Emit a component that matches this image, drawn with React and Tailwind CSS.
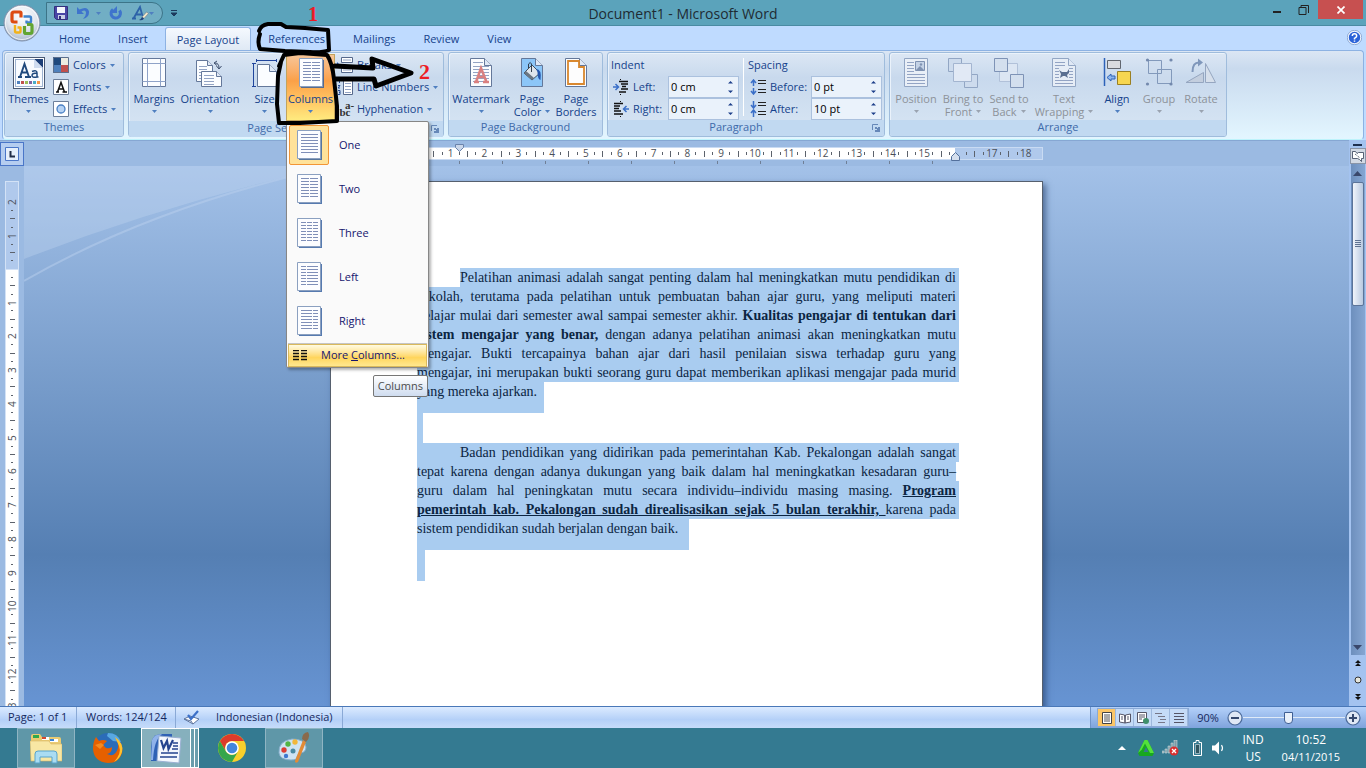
import { clsx } from 'clsx';

const TABS = ['Home', 'Insert', 'Page Layout', 'References', 'Mailings', 'Review', 'View'];

const COLUMN_PRESETS = [
  { name: 'One', bars: [[9, 17]] },
  { name: 'Two', bars: [[9, 8], [18, 8]] },
  { name: 'Three', bars: [[9, 5], [15, 5], [21, 5]] },
  { name: 'Left', bars: [[9, 5], [15, 11]] },
  { name: 'Right', bars: [[9, 11], [21, 5]] },
];

function Caret({ muted }) {
  return (
    <svg width="5" height="3" viewBox="0 0 5 3" className="inline-block shrink-0" aria-hidden="true">
      <path d="M0 0h5L2.500 3z" fill={muted ? '#9aa3b0' : '#4f7fc0'} />
    </svg>
  );
}

/* ---------- icons ---------- */

function Icon({ w = 32, h = 32, children }) {
  return (
    <svg width={w} height={h} viewBox={`0 0 ${w} ${h}`} className="shrink-0" aria-hidden="true">
      {children}
    </svg>
  );
}

function Sheet({ x = 5, y = 1, w = 21, h = 28, fold = 7, fill = '#fbfdff', stroke = '#64789a' }) {
  return (
    <>
      <path
        d={`M${x} ${y}h${w - fold}l${fold} ${fold}v${h - fold}h-${w}z`}
        fill={fill}
        stroke={stroke}
      />
      <path d={`M${x + w - fold} ${y}v${fold}h${fold}`} fill="#dfe8f5" stroke={stroke} />
    </>
  );
}

function Lines({ x, y, w, n, step = 3, color = '#93a4c4' }) {
  return Array.from({ length: n }, (_, i) => (
    <path key={i} d={`M${x} ${y + i * step + 0.5}h${w}`} stroke={color} />
  ));
}

function OfficeLogo() {
  return (
    <svg width="38" height="38" viewBox="0 0 38 38" aria-hidden="true">
      <defs>
        <radialGradient id="orb" cx="50%" cy="30%" r="70%">
          <stop offset="0" stopColor="#ffffff" />
          <stop offset="0.6" stopColor="#dfe5ee" />
          <stop offset="1" stopColor="#a9b7cb" />
        </radialGradient>
      </defs>
      <circle cx="19" cy="19" r="18" fill="url(#orb)" stroke="#7f90aa" />
      <circle cx="19" cy="19" r="16.500" fill="none" stroke="#fff" opacity="0.700" />
      <g fill="none" strokeLinejoin="round">
        <path d="M18 13.500V9q0-1-1-1h-6q-2 0-2 2v6q0 2 2 2h3.500" stroke="#dd4b12" strokeWidth="3.200" />
        <path d="M20.500 12.500h6q1.500 0 1.500 1.500v3.500q0 1-1 1h-3.500v-2" stroke="#3f83cc" strokeWidth="2.400" />
        <path d="M12 21v6q0 1.500 1.500 1.500h3q1 0 1-1v-4h-3" stroke="#f2b21a" strokeWidth="2.400" />
        <path d="M24 20.500h4q1 0 1 1v6q0 2-2 2h-4q-1.500 0-1.500-1.500v-6" stroke="#62a532" strokeWidth="3.200" />
      </g>
    </svg>
  );
}

function SaveIcon() {
  return (
    <Icon w={14} h={14}>
      <path d="M.5.5h13v13h-11l-2-2z" fill="#4a46a6" stroke="#33307c" />
      <path d="M3 1h8v6H3z" fill="#f4f6fc" />
      <path d="M4 9h7v4H4z" fill="#c9cfe6" />
      <path d="M5 10h2v3H5z" fill="#33307c" />
    </Icon>
  );
}

function UndoIcon() {
  return (
    <Icon w={14} h={14}>
      <path d="M1 1v7h7L5.500 5.500Q9.500 3 10 6.500q.3 3.500-3 6.500 6.500-1.500 6-7.500Q11.500-.5 3.500 3.500z" fill="#3f74cc" />
    </Icon>
  );
}

function RedoIcon() {
  return (
    <Icon w={14} h={14}>
      <path d="M4 3.500a4.700 4.700 0 1 0 6.500 1" fill="none" stroke="#3f74cc" strokeWidth="3" />
      <path d="M8 0v7H1z" fill="#3f74cc" />
    </Icon>
  );
}

function StyleIcon() {
  return (
    <Icon w={18} h={16}>
      <path d="M1 13.500h4M2.500 13.500L9 2l2.500 9M5 9.500h5" fill="none" stroke="#2d62a8" strokeWidth="1.800" />
      <path d="M15.500 7l2 1.500-4.500 5-2-1.500z" fill="#efe6c8" stroke="#69768c" strokeWidth="0.600" />
      <path d="M11 12l2 1.500q-1 2.500-5 1.500 2-.5 3-3z" fill="#20447d" />
    </Icon>
  );
}

function HelpIcon() {
  return (
    <svg width="15" height="15" viewBox="0 0 15 15" aria-hidden="true">
      <circle cx="7.500" cy="7.500" r="6.500" fill="#2a62d8" stroke="#f4f8ff" strokeWidth="1.500" />
      <circle cx="7.500" cy="7.500" r="7.200" fill="none" stroke="#5b7fb8" strokeWidth="0.600" />
      <path d="M5.300 6q0-2.200 2.200-2.200T9.700 6q0 1-2.200 2.300V9.500M7.500 10.500v1.300" fill="none" stroke="#fff" strokeWidth="1.500" />
    </svg>
  );
}

function ThemesIcon() {
  return (
    <Icon>
      <rect x="0.500" y="0.500" width="31" height="31" fill="#fff" stroke="#4a5a75" />
      <rect x="2.500" y="2.500" width="27" height="27" fill="#f8fbff" stroke="#9db2d0" />
      <path d="M21 2h9v9z" fill="#1d3f77" />
      <path d="M21 2v9h9z" fill="#cfdcf0" />
      <path d="M5 20h4M12 20h6M7 20L11.500 7l4.500 13M8.500 15.500h6" fill="none" stroke="#1f497d" strokeWidth="1.900" />
      <path d="M19 14.500q5-2 5 1.500v4q-5 1-5-1.500t5-2.500M24 20h1.500" fill="none" stroke="#1f497d" strokeWidth="1.500" />
      <path d="M4 24h3v3H4z" fill="#4f81bd" />
      <path d="M8 24h3v3H8z" fill="#c0504d" />
      <path d="M12 24h3v3h-3z" fill="#9bbb59" />
      <path d="M16 24h3v3h-3z" fill="#8064a2" />
      <path d="M20 24h3v3h-3z" fill="#4bacc6" />
      <path d="M24 24h3v3h-3z" fill="#f79646" />
    </Icon>
  );
}

function ColorsIcon() {
  return (
    <Icon w={16} h={16}>
      <path d="M0 0h8v8H0z" fill="#1f497d" />
      <path d="M8 0h8v8H8z" fill="#eeece1" />
      <path d="M0 8h8v8H0z" fill="#4f81bd" />
      <path d="M8 8h8v8H8z" fill="#c0504d" />
      <path d="M.5.5h15v15H.5z" fill="none" stroke="#5b6f8d" />
    </Icon>
  );
}

function FontsIcon() {
  return (
    <Icon w={16} h={16}>
      <path d="M.5.5h15v15H.5z" fill="#fff" stroke="#6d7f9a" />
      <path d="M3 13h3M9.500 13H14M4.500 13L8 3.500l3.500 9.500M6 10h4" fill="none" stroke="#111" strokeWidth="1.500" />
    </Icon>
  );
}

function EffectsIcon() {
  return (
    <Icon w={16} h={16}>
      <path d="M.5.5h15v15H.5z" fill="#fff" stroke="#6d7f9a" />
      <circle cx="8" cy="8" r="4" fill="#b7d3f4" stroke="#4a80c4" strokeWidth="1.300" />
    </Icon>
  );
}

function MarginsIcon() {
  return (
    <Icon>
      <path d="M4.500 1.500h23v28h-23z" fill="#fbfdff" stroke="#64789a" />
      <path d="M9.500 1.500v28M22.500 1.500v28M4.500 6.500h23M4.500 24.500h23" stroke="#8fa3c8" />
    </Icon>
  );
}

function OrientationIcon() {
  return (
    <Icon>
      <Sheet x={2.500} y={3.500} w={16} h={21} fold={5} />
      <Lines x={5} y={9} w={8} n={5} />
      <Sheet x={7.500} y={14.500} w={20} h={15} fold={5} />
      <Lines x={10} y={18} w={10} n={4} />
      <path d="M21 6q4 0 4 5M22.500 9l2.500 3 2.500-3M23 4l-3 2 3 2.500" fill="none" stroke="#3c4d6c" />
    </Icon>
  );
}

function SizeIcon() {
  return (
    <Icon>
      <Sheet x={8.500} y={7.500} w={19} h={22} fold={7} />
      <path d="M4.500 7v22M3 6.500h4M3 29.500h4M8 3.500h19M7.500 2v3M27.500 2v3" fill="none" stroke="#20459c" />
    </Icon>
  );
}

function ColumnsIcon({ bars }) {
  return (
    <Icon w={34} h={32}>
      <path d="M6 3h24v28H7z" fill="#2d5a9c" opacity="0.800" />
      <path d="M5.500 1.500h23v28h-23z" fill="#fcfdff" stroke="#8ba0c0" />
      {bars.map(([x, w]) => (
        <Lines key={x} x={x} y={5} w={w} n={7} color="#7f8fb8" />
      ))}
    </Icon>
  );
}

function BreaksIcon() {
  return (
    <Icon w={16} h={16}>
      <path d="M4.500.5h11v5h-11zM4.500 10.500h11v5h-11z" fill="#fff" stroke="#56698c" />
      <path d="M6 3h8M6 13h8" stroke="#93a4c4" />
      <path d="M0 5l3 3-3 3z" fill="#2f62c0" />
    </Icon>
  );
}

function LineNumbersIcon() {
  return (
    <Icon w={16} h={16}>
      <path d="M6.500 1.500h9v14h-9z" fill="#fff" stroke="#56698c" />
      <Lines x={8} y={4} w={6} n={4} />
      <path d="M1 1h1.500v3M1 6.500h2L1 9h2M1 11.500h2v4H1M2 13.500h1" fill="none" stroke="#274b96" />
    </Icon>
  );
}

function HyphenationIcon() {
  return (
    <span className="flex w-4 shrink-0 flex-col font-['Liberation_Serif',serif] text-[11px] leading-[7px] font-bold text-[#333]">
      <span className="pl-2">a-</span>
      <span>bc</span>
    </span>
  );
}

function WatermarkIcon() {
  return (
    <Icon>
      <Sheet x={5.500} y={1.500} />
      <Lines x={8} y={5} w={10} n={1} />
      <Lines x={8} y={9} w={16} n={6} />
      <path d="M9 25h5M18 25h6M11 25l5-14 5.500 14M13 20h6" fill="none" stroke="#d98080" strokeWidth="2.500" />
    </Icon>
  );
}

function PageColorIcon() {
  return (
    <Icon>
      <Sheet x={5.500} y={1.500} fill="#8cc6f8" />
      <path d="M8 16l8-8 8 8-8 7z" fill="#dfe5ec" stroke="#41505f" />
      <path d="M8 16l8 7 2-2-8-7z" fill="#6a7683" />
      <path d="M12.500 11V7q2-3 3 0v8" fill="none" stroke="#333f4d" />
      <path d="M20 12q6 0 4.500 11-3-1-3-8z" fill="#2556ac" />
    </Icon>
  );
}

function PageBordersIcon() {
  return (
    <Icon>
      <Sheet x={5.500} y={1.500} />
      <path d="M8 4h11v6h5v17H8z" fill="#fdfdfd" stroke="#d9882f" strokeWidth="1.800" />
    </Icon>
  );
}

function PositionIcon() {
  return (
    <Icon>
      <path d="M4.500 1.500h23v28h-23z" fill="#e9eff7" stroke="#92a6c4" />
      <Lines x={7} y={5} w={7} n={4} />
      <Lines x={7} y={17} w={18} n={4} />
      <path d="M15.500 4.500h9v9h-9z" fill="#c4d2e6" stroke="#7f92b2" />
      <path d="M16 13l4-4 4 4z" fill="#7f92b2" />
      <circle cx="21" cy="7.500" r="1.200" fill="#7f92b2" />
    </Icon>
  );
}

function BringFrontIcon() {
  return (
    <Icon>
      <path d="M1.500 1.500h13v13h-13zM17.500 17.500h13v13h-13z" fill="#cddbed" stroke="#92a6c4" />
      <path d="M6.500 6.500h18v18h-18z" fill="#e1e9f5" stroke="#a3b5d0" />
    </Icon>
  );
}

function SendBackIcon() {
  return (
    <Icon>
      <path d="M6.500 6.500h18v18h-18z" fill="#dce6f3" stroke="#b1c1d9" />
      <path d="M1.500 1.500h13v13h-13zM17.500 17.500h13v13h-13z" fill="#d3dfee" stroke="#7e93b6" />
    </Icon>
  );
}

function WrapIcon() {
  return (
    <Icon>
      <Sheet x={4.500} y={1.500} w={23} fill="#e6edf6" stroke="#92a6c4" />
      <Lines x={7} y={5} w={10} n={2} />
      <Lines x={7} y={11} w={4} n={4} />
      <Lines x={21} y={11} w={4} n={4} />
      <Lines x={7} y={23} w={18} n={2} />
      <path d="M11 13l3 2h5l2-3v4l-2 2 1 3-3-2h-2l-3 2 1-4z" fill="#5a6f90" />
    </Icon>
  );
}

function AlignIcon() {
  return (
    <Icon>
      <path d="M3.500 1v28" stroke="#2d62b8" strokeWidth="1.500" />
      <path d="M6.500 3.500h13v8h-13z" fill="#d9dbe0" stroke="#61666f" />
      <path d="M16.500 14.500h13v13h-13z" fill="#f7d650" stroke="#9a7f22" />
      <path d="M6 20.500l4-3.500v2h4v3h-4v2z" fill="#8db6ee" stroke="#2d62b8" />
    </Icon>
  );
}

function GroupIcon() {
  return (
    <Icon>
      <path d="M5.500 3.500h13v13h-13zM14.500 12.500h14v14h-14z" fill="#cddcee" fillOpacity="0.500" stroke="#8299bb" />
      <g fill="#7389ad">
        <circle cx="4.500" cy="3" r="1.600" />
        <circle cx="28" cy="3" r="1.600" />
        <circle cx="4.500" cy="27" r="1.600" />
        <circle cx="28" cy="27" r="1.600" />
      </g>
    </Icon>
  );
}

function RotateIcon() {
  return (
    <Icon>
      <path d="M1 25.500h17.500v-10z" fill="#c3cede" stroke="#95a6c0" />
      <path d="M20.500 6.500v19h10z" fill="#d6dfeb" stroke="#95a6c0" />
      <path d="M7.500 15q0-10 7-9.500" fill="none" stroke="#7f97bb" strokeWidth="2" />
      <path d="M13 1.500l5 4-5 4z" fill="#7f97bb" />
    </Icon>
  );
}

function IndentIcon({ flip }) {
  return (
    <Icon w={16} h={16}>
      {flip ? (
        <>
          <path d="M1 2.500h9M1 5h6M1 7.500h5M1 10h7M1 13h9" stroke="#111" strokeWidth="1.600" />
          <path d="M16 8h-5M13.500 5L10.500 8l3 3" fill="none" stroke="#3a6fc8" strokeWidth="1.500" />
        </>
      ) : (
        <>
          <path d="M6 2.500h9M8 5h7M9 7.500h4M8 10h7M6 13h7" stroke="#111" strokeWidth="1.600" />
          <path d="M0 8h5M2.500 5l3 3-3 3" fill="none" stroke="#3a6fc8" strokeWidth="1.500" />
        </>
      )}
      <path d="M7.500 0v1M7.500 15v1" stroke="#111" />
    </Icon>
  );
}

function SpacingIcon({ inward }) {
  return (
    <Icon w={16} h={16}>
      <path d="M8 1.500h8M8 4.500h8M8 10.500h8M8 13.500h8" stroke="#222" />
      <path
        d={inward ? 'M3.500 0v6M1 4l2.500 3L6 4M3.500 16v-6M1 12l2.500-3L6 12' : 'M3.500 7V1M1 4l2.500-3L6 4M3.500 9v6M1 12l2.500 3L6 12'}
        fill="none"
        stroke="#3a6fc8"
        strokeWidth="1.500"
      />
    </Icon>
  );
}

/* ---------- ribbon ---------- */

function RibbonGroup({ title, launcher, className, children }) {
  return (
    <section
      aria-label={title}
      className={clsx(
        'flex shrink-0 flex-col rounded-[3px] border border-[#9fbcdc] bg-linear-to-b from-[#dce7f4] via-[#c8d9ed] via-30% to-[#d8e6f4] shadow-[inset_1px_1px_0_#eaf2fb]',
        className,
      )}
    >
      <div className="flex flex-1 px-0.5 pt-px">{children}</div>
      <div
        className={clsx(
          'relative h-4 shrink-0 rounded-b-[2px] bg-[#c1d9f1] text-center leading-[14px] text-[#3e6aaa]',
          launcher && 'pr-5',
        )}
      >
        {title}
        {launcher && (
          <button type="button" aria-label={`${title} settings`} className="absolute top-1 right-1 flex">
            <svg width="8" height="8" viewBox="0 0 8 8">
              <path d="M.5 6V.5H6" fill="none" stroke="#6688b8" />
              <path d="M3 3h2v1h1V3h2v5H3V6h2V5H3z" fill="#6688b8" />
            </svg>
          </button>
        )}
      </div>
    </section>
  );
}

function BigButton({ icon, label, second, caret, disabled, className }) {
  return (
    <button
      type="button"
      disabled={disabled}
      className={clsx(
        'flex shrink-0 flex-col items-center pt-[3px] leading-[13px]',
        disabled ? 'text-[#8d9299]' : 'text-[#15428b]',
        className,
      )}
    >
      {icon}
      <span className="mt-[3px] whitespace-nowrap">{label}</span>
      <span className="flex h-[13px] items-center gap-1 whitespace-nowrap">
        {second}
        {caret && <Caret muted={disabled} />}
      </span>
    </button>
  );
}

function SmallButton({ icon, label }) {
  return (
    <button type="button" className="flex h-[22px] items-center gap-1 whitespace-nowrap text-[#15428b]">
      {icon}
      <span>{label}</span>
      <Caret />
    </button>
  );
}

function SpinField({ id, label, value, icon, labelWidth }) {
  return (
    <div className="flex h-[22px] items-center">
      {icon}
      <label htmlFor={id} className={clsx('pl-1 whitespace-nowrap', labelWidth)}>{label}</label>
      <div className="flex h-[22px] w-[71px] items-center border border-[#abc1de] bg-[#eaf2fb] pr-1">
        <input id={id} defaultValue={value} className="w-full min-w-0 bg-transparent pl-0.5 text-black outline-none" />
        <svg width="7" height="14" viewBox="0 0 7 14" className="shrink-0" aria-hidden="true">
          <path d="M1 3.500h5L3.500 1zM1 10.500h5L3.500 13z" fill="#1d3f8a" />
        </svg>
      </div>
    </div>
  );
}

function ColumnsMenu() {
  return (
    <div role="menu" className="absolute top-full left-0 z-20 w-[143px] rounded-[2px] border border-[#868686] bg-[#fafafa] px-px pt-px text-[#15156e] shadow-[2px_2px_3px_#0000004d]">
      {COLUMN_PRESETS.map((preset, i) => (
        <button key={preset.name} type="button" role="menuitem" className="flex h-11 w-full items-center gap-2.5 pl-px">
          <span
            className={clsx(
              'flex size-10 items-center justify-center rounded-[2px] border',
              i === 0 ? 'border-[#f29536] bg-[#ffe29a]' : 'border-transparent',
            )}
          >
            <ColumnsIcon bars={preset.bars} />
          </span>
          {preset.name}
        </button>
      ))}
      <hr className="border-[#c5c5c5]" />
      <button
        type="button"
        role="menuitem"
        className="flex h-[23px] w-full items-center gap-3.5 border border-[#d9b95c] bg-linear-to-b from-[#fffbe2] via-[#ffd55b] via-60% to-[#ffe88f] pl-1"
      >
        <Icon w={14} h={11}>
          <path d="M0 .5h6M0 3.500h6M0 6.500h6M0 9.500h6M8 .5h6M8 3.500h6M8 6.500h6M8 9.500h6" stroke="#111" strokeWidth="1.500" />
        </Icon>
        <span>More <u>C</u>olumns...</span>
      </button>
      <div role="tooltip" className="absolute top-full right-0 mt-2 rounded-[2px] border border-[#767676] bg-linear-to-b from-white to-[#cfdcef] px-1 leading-5 text-[#4c4c4c]">
        Columns
      </div>
    </div>
  );
}

function Ribbon() {
  return (
    <div className="mx-0.5 flex h-[90px] shrink-0 gap-1 rounded-[4px] border border-[#8db2e3] border-b-[#bdf3fb] bg-linear-to-b from-[#dbe6f4] via-[#c9daee] via-20% to-[#e3f6ff] px-px pt-px pb-0.5">
      <RibbonGroup title="Themes" className="w-[120px]">
        <BigButton icon={<ThemesIcon />} label="Themes" caret className="w-[43px]" />
        <div className="pl-[3px]">
          <SmallButton icon={<ColorsIcon />} label="Colors" />
          <SmallButton icon={<FontsIcon />} label="Fonts" />
          <SmallButton icon={<EffectsIcon />} label="Effects" />
        </div>
      </RibbonGroup>

      <RibbonGroup title="Page Setup" launcher className="w-[316px]">
        <BigButton icon={<MarginsIcon />} label="Margins" caret className="w-[46px]" />
        <BigButton icon={<OrientationIcon />} label="Orientation" caret className="w-[66px]" />
        <BigButton icon={<SizeIcon />} label="Size" caret className="w-[43px]" />
        <div className="relative flex h-[67px]">
          <BigButton
            icon={<ColumnsIcon bars={COLUMN_PRESETS[1].bars} />}
            label="Columns"
            caret
            className="w-[49px] bg-linear-to-b from-[#f6c79a] via-[#fba047] via-40% to-[#ffec80] shadow-[inset_0_0_0_1px_#c2a45c]"
          />
          <ColumnsMenu />
        </div>
        <div className="pl-0.5">
          <SmallButton icon={<BreaksIcon />} label="Breaks" />
          <SmallButton icon={<LineNumbersIcon />} label="Line Numbers" />
          <SmallButton icon={<HyphenationIcon />} label="Hyphenation" />
        </div>
      </RibbonGroup>

      <RibbonGroup title="Page Background" className="w-[155px]">
        <BigButton icon={<WatermarkIcon />} label="Watermark" caret className="w-[60px]" />
        <BigButton icon={<PageColorIcon />} label="Page" second="Color" caret className="w-[42px]" />
        <BigButton icon={<PageBordersIcon />} label="Page" second="Borders" className="w-[46px]" />
      </RibbonGroup>

      <RibbonGroup title="Paragraph" launcher className="w-[278px] text-[#15428b]">
        <div className="pl-px">
          <div className="h-[22px] leading-[22px]">Indent</div>
          <div className="pl-0.5">
            <SpinField id="indent-left" label="Left:" value="0 cm" icon={<IndentIcon />} labelWidth="w-[39px]" />
            <SpinField id="indent-right" label="Right:" value="0 cm" icon={<IndentIcon flip />} labelWidth="w-[39px]" />
          </div>
        </div>
        <div className="mx-1 my-1 w-px bg-white" />
        <div>
          <div className="h-[22px] leading-[22px]">Spacing</div>
          <div className="pl-0.5">
            <SpinField id="space-before" label="Before:" value="0 pt" icon={<SpacingIcon />} labelWidth="w-[45px]" />
            <SpinField id="space-after" label="After:" value="10 pt" icon={<SpacingIcon inward />} labelWidth="w-[45px]" />
          </div>
        </div>
      </RibbonGroup>

      <RibbonGroup title="Arrange" className="w-[338px]">
        <BigButton disabled icon={<PositionIcon />} label="Position" caret className="w-[48px]" />
        <BigButton disabled icon={<BringFrontIcon />} label="Bring to" second="Front" caret className="w-[46px]" />
        <BigButton disabled icon={<SendBackIcon />} label="Send to" second="Back" caret className="w-[46px]" />
        <BigButton disabled icon={<WrapIcon />} label="Text" second="Wrapping" caret className="w-[64px]" />
        <BigButton icon={<AlignIcon />} label="Align" caret className="w-[42px]" />
        <BigButton disabled icon={<GroupIcon />} label="Group" caret className="w-[42px]" />
        <BigButton disabled icon={<RotateIcon />} label="Rotate" caret className="w-[42px]" />
      </RibbonGroup>
    </div>
  );
}

/* ---------- title bar and tabs ---------- */

function TitleBar() {
  return (
    <header className="relative flex h-[26px] shrink-0 items-start justify-between border-b border-[#4a8ba3] bg-[#5ba3bb]">
      <div className="flex items-center pt-0.5">
        <div className="ml-[46px] flex h-[22px] w-[117px] items-center rounded-r-full border border-[#3c7488] bg-[#71aec4] pl-[7px]">
          <button type="button" aria-label="Save" className="flex"><SaveIcon /></button>
          <button type="button" aria-label="Undo" className="ml-2 flex items-center gap-1.5"><UndoIcon /><Caret /></button>
          <button type="button" aria-label="Redo" className="ml-2 flex"><RedoIcon /></button>
          <button type="button" aria-label="Styles" className="ml-2 flex items-center"><StyleIcon /><Caret /></button>
        </div>
        <button type="button" aria-label="Customize toolbar" className="ml-2">
          <svg width="6" height="7" viewBox="0 0 6 7"><path d="M0 .5h6M0 3h6L3 6z" fill="#1d3a5c" stroke="#1d3a5c" /></svg>
        </button>
      </div>
      <h1 className="absolute inset-x-0 top-0 text-center text-[14px] leading-7 text-[#1f2b33]">Document1 - Microsoft Word</h1>
      <div className="relative flex h-[19px] items-center pr-[3px]">
        <button type="button" aria-label="Minimize" className="flex w-[26px] justify-center pt-1">
          <svg width="8" height="2"><path d="M0 0h8v2H0z" fill="#222" /></svg>
        </button>
        <button type="button" aria-label="Restore" className="mr-0.5 flex w-[26px] justify-center">
          <svg width="11" height="10" viewBox="0 0 11 10"><path d="M1 2.500h7v7H1zM3 2V.5h7.500V8" fill="none" stroke="#222" /></svg>
        </button>
        <button type="button" aria-label="Close" className="flex h-[19px] w-[45px] items-center justify-center bg-[#c75050]">
          <svg width="8" height="8" viewBox="0 0 8 8"><path d="M.5.5l7 7M7.500.5l-7 7" stroke="#fff" strokeWidth="1.700" /></svg>
        </button>
      </div>
    </header>
  );
}

function TabStrip() {
  return (
    <nav className="flex h-[24px] shrink-0 items-end bg-[#bfdbff] pl-[45px]">
      {TABS.map((tab) => (
        <button
          key={tab}
          type="button"
          className={clsx(
            'h-[23px] pt-0.5 text-[#15428b]',
            tab === 'Page Layout'
              ? 'mx-[3px] rounded-t-[3px] border border-b-0 border-[#8db2e3] bg-linear-to-b from-[#f5f9fe] to-[#dfe9f5] px-[11px]'
              : 'px-[14px]',
          )}
        >
          {tab}
        </button>
      ))}
      <button type="button" aria-label="Help" className="mr-1 mb-[5px] ml-auto flex"><HelpIcon /></button>
    </nav>
  );
}

/* ---------- rulers ---------- */

function HorizontalRuler() {
  return (
    <div className="relative flex h-[13px] w-[713px] shrink-0 overflow-visible border border-[#c9dbf3] bg-[#b0c9ec] text-[10px] leading-[11px] text-[#4a4f58]">
      <div className="w-[86px] shrink-0" />
      <div className="w-[538px] bg-white" />
      <div className="absolute top-0 left-[90px] flex w-[609px]">
        {Array.from({ length: 18 }, (_, i) => (
          <div key={i} className="grid flex-1 grid-cols-4 place-items-center">
            <i className="h-[3px] w-px bg-[#5c626c]" />
            <i className="h-[6px] w-px bg-[#5c626c]" />
            <i className="h-[3px] w-px bg-[#5c626c]" />
            <span className="flex w-0 justify-center">{i === 15 ? '' : i + 1}</span>
          </div>
        ))}
      </div>
      <svg width="9" height="8" viewBox="0 0 9 8" className="absolute -top-1 left-[124px]">
        <path d="M.5.5h8v3l-4 4-4-4z" fill="#c9d6ea" stroke="#6a83ab" />
      </svg>
      <svg width="9" height="9" viewBox="0 0 9 9" className="absolute top-1 left-[620px]">
        <path d="M.5 8.500h8v-4l-4-4-4 4z" fill="#d5dfee" stroke="#53709c" />
      </svg>
      <div className="absolute top-[13px] left-[128px] flex gap-[42px]">
        {Array.from({ length: 12 }, (_, i) => (
          <i key={i} className="h-[3px] w-px bg-[#6f7f96]" />
        ))}
      </div>
    </div>
  );
}

function VerticalCell({ n, first }) {
  const label = (
    <span className="flex h-0 rotate-180 items-center justify-center [writing-mode:vertical-rl]">{n}</span>
  );
  return (
    <div className="grid flex-1 grid-rows-4 place-items-center">
      {first && label}
      <i className="h-px w-[2px] bg-[#5c626c]" />
      <i className="h-px w-[5px] bg-[#5c626c]" />
      <i className="h-px w-[2px] bg-[#5c626c]" />
      {!first && label}
    </div>
  );
}

function VerticalRuler() {
  return (
    <div className="flex w-6 shrink-0 flex-col overflow-hidden bg-[#9bbae2] pt-[15px] pl-[5px] text-[10px] leading-[12px] text-[#4a4f58]">
      <div className="flex h-[89px] w-[14px] shrink-0 flex-col border border-[#d3e2f6] bg-[#b0c9ec] pt-4 pb-1">
        <VerticalCell n={2} first />
        <VerticalCell n={1} first />
      </div>
      <div className="min-h-0 w-[14px] flex-1 overflow-hidden border-x border-[#d3e2f6] bg-white pt-[3px]">
        <div className="flex h-[439px] flex-col">
          {Array.from({ length: 13 }, (_, i) => (
            <VerticalCell key={i} n={i + 1} />
          ))}
        </div>
      </div>
    </div>
  );
}

/* ---------- document ---------- */

/* One justified line of the selection; the highlight runs 3px past the text. */
function Line({ className = 'pr-[3px]', children }) {
  return (
    <span className={clsx('block h-[19px] bg-[#a9ccf0] [text-align-last:justify]', className)}>
      {children}
    </span>
  );
}

function DocumentPage() {
  return (
    <article className="mt-[15px] h-[1006px] w-[713px] shrink-0 border border-[#56606e] bg-white pt-[86px] pr-[83px] pl-[86px] font-['Liberation_Serif',serif] text-[14px] leading-[19px] text-[#0b2542] shadow-[3px_3px_6px_#1f3a6699]">
      <p>
        <Line className="ml-[43px] pr-[3px]">
          Pelatihan animasi adalah sangat penting dalam hal meningkatkan mutu pendidikan di
        </Line>
        <Line>sekolah, terutama pada pelatihan untuk pembuatan bahan ajar guru, yang meliputi materi</Line>
        <Line>
          belajar mulai dari semester awal sampai semester akhir. <b>Kualitas pengajar di tentukan dari</b>
        </Line>
        <Line>
          <b>sistem mengajar yang benar,</b> dengan adanya pelatihan animasi akan meningkatkan mutu
        </Line>
        <Line>mengajar. Bukti tercapainya bahan ajar dari hasil penilaian siswa terhadap guru yang</Line>
        <Line>mengajar, ini merupakan bukti seorang guru dapat memberikan aplikasi mengajar pada murid</Line>
        <span className="block h-[31px] w-[127px] bg-[#a9ccf0] whitespace-nowrap">yang mereka ajarkan.</span>
      </p>
      <p className="h-[30px] w-[6px] bg-[#a9ccf0]" />
      <p>
        <Line className="pr-[3px] pl-[43px]">
          Badan pendidikan yang didirikan pada pemerintahan Kab. Pekalongan adalah sangat
        </Line>
        <Line className="mr-[3px]">
          tepat karena dengan adanya dukungan yang baik dalam hal meningkatkan kesadaran guru–
        </Line>
        <Line>
          guru dalam hal peningkatan mutu secara individu–individu masing masing. <b className="underline">Program</b>
        </Line>
        <Line>
          <b className="underline">pemerintah kab. Pekalongan sudah direalisasikan sejak 5 bulan terakhir, </b>karena pada
        </Line>
        <span className="block h-[31px] w-[272px] bg-[#a9ccf0] whitespace-nowrap">sistem pendidikan sudah berjalan dengan baik.</span>
      </p>
      <p className="h-[31px] w-2 bg-[#a9ccf0]" />
    </article>
  );
}

function Workspace() {
  return (
    <main className="flex min-h-0 flex-1 bg-[#9bbae2]">
      <div className="flex min-w-0 flex-1 flex-col">
        <div className="flex h-[26px] shrink-0 items-start border-t border-[#86a7d3]">
          <button type="button" aria-label="Tab stop" className="mt-px flex size-6 shrink-0 items-center justify-center border border-[#4a76c8] bg-[#b5cdf0]">
            <svg width="14" height="14" viewBox="0 0 14 14">
              <path d="M.5.5h13v13H.5z" fill="#e6effb" stroke="#4a76c8" />
              <path d="M5.500 4v5.500H10" fill="none" stroke="#222e48" strokeWidth="2" />
            </svg>
          </button>
          <div className="flex flex-1 justify-center pt-1.5"><HorizontalRuler /></div>
        </div>
        <div className="flex min-h-0 flex-1">
          <VerticalRuler />
          <div className="relative flex min-w-0 flex-1 items-start justify-center overflow-hidden bg-linear-to-b from-[#a3c1e8] via-[#557fb3] via-72% to-[#6794d3]">
            <svg viewBox="0 0 310 120" className="absolute top-0 left-0 w-[310px]" aria-hidden="true">
              <path d="M0 0H310Q150 35 0 93z" fill="#c3d8f2" opacity="0.350" />
              <path d="M0 115Q130 40 310 0" fill="none" stroke="#b9d0ee" strokeWidth="2" opacity="0.500" />
            </svg>
            <div className="relative flex shrink-0"><DocumentPage /></div>
          </div>
        </div>
      </div>
      <VerticalScrollbar />
    </main>
  );
}

function VerticalScrollbar() {
  return (
    <div className="flex w-[17px] shrink-0 flex-col items-center bg-[#a4c3f0] pt-1">
      <div className="h-0.5 w-[9px] shrink-0 bg-[#1e3050]" />
      <button type="button" aria-label="View ruler" className="mt-0.5 flex size-4 shrink-0 items-center justify-center border border-[#8a95a8] bg-[#d2d9e4]">
        <svg width="12" height="12" viewBox="0 0 12 12">
          <path d="M.5 1.500h3l1.500 2 1.500-1h5v6h-2v3l-2-2-2-1h-5z" fill="#fff" stroke="#333f55" strokeWidth="0.800" />
          <path d="M3 4l5 4" stroke="#333f55" strokeDasharray="1 1" />
        </svg>
      </button>
      <div className="flex min-h-0 w-[14px] flex-1 flex-col items-center bg-linear-to-r from-[#6d8fbd] to-[#86a6d2]">
        <div className="flex h-[18px] shrink-0 items-center">
          <svg width="9" height="5"><path d="M0 5h9L4.500 0z" fill="#39476b" /></svg>
        </div>
        <div className="flex h-[124px] w-[12px] shrink-0 items-center justify-center rounded-[2px] border border-[#5c7499] bg-linear-to-r from-[#f0f4fa] to-[#b9c9e0]">
          <svg width="6" height="8"><path d="M0 .5h6M0 2.500h6M0 4.500h6M0 6.500h6" stroke="#5f7392" /></svg>
        </div>
        <div className="mt-auto flex h-4 shrink-0 items-center">
          <svg width="9" height="5"><path d="M0 0h9L4.500 5z" fill="#39476b" /></svg>
        </div>
      </div>
      <div className="flex h-[51px] shrink-0 flex-col items-center justify-around">
        <svg width="6" height="7"><path d="M0 3h6L3 0zM0 6h6L3 3z" fill="#111" /></svg>
        <svg width="8" height="8"><circle cx="4" cy="4" r="3" fill="#e6e6dc" stroke="#333" /></svg>
        <svg width="6" height="7"><path d="M0 0h6L3 3zM0 3h6L3 6z" fill="#111" /></svg>
      </div>
    </div>
  );
}

/* ---------- status bar ---------- */

function ViewButton({ label, active, children }) {
  return (
    <button
      type="button"
      aria-label={label}
      className={clsx(
        'flex h-[17px] w-[18px] items-center justify-center border-r border-[#9db8dd]',
        active ? 'bg-[#fbc667]' : 'bg-[#c5dbf7]',
      )}
    >
      <svg width="12" height="12" viewBox="0 0 12 12">{children}</svg>
    </button>
  );
}

function ZoomGlyph({ plus }) {
  return (
    <svg width="16" height="16" viewBox="0 0 16 16">
      <circle cx="8" cy="8" r="7" fill="#dfe8f5" stroke="#4b6a9a" strokeWidth="1.200" />
      <path d={plus ? 'M4 8h8M8 4v8' : 'M4 8h8'} stroke="#35496e" strokeWidth="2" />
    </svg>
  );
}

function StatusBar() {
  return (
    <footer className="flex h-[22px] shrink-0 items-stretch border-t border-[#4a78b8] bg-linear-to-b from-[#dcebff] via-[#b4d0f8] via-60% to-[#c6dcfa] leading-[20px] text-[#15285e]">
      <span className="w-[77px] border-r border-[#8aa9d6] pl-2">Page: 1 of 1</span>
      <span className="w-[99px] border-r border-[#8aa9d6] pl-[9px]">Words: 124/124</span>
      <span className="flex w-[33px] items-center pl-[7px]">
        <svg width="17" height="15" viewBox="0 0 17 15" aria-label="Spelling check">
          <path d="M1 9l6-3 9 3-6 5z" fill="#fff" stroke="#5d75a0" />
          <path d="M1 9l7 2 2 3" fill="none" stroke="#5d75a0" />
          <path d="M5 5l3 4 7-8" fill="none" stroke="#3c70c8" strokeWidth="2.200" />
        </svg>
      </span>
      <span className="w-[134px] border-r border-[#8aa9d6] pl-[7px]">Indonesian (Indonesia)</span>
      <div className="ml-auto flex items-center border-l border-[#6f93c8] bg-linear-to-b from-[#b4d1fa] to-[#7fa3dc] pr-[5px] pl-1.5">
        <div className="flex border border-[#8aa9d6]">
          <ViewButton label="Print Layout" active>
            <path d="M1.500.5h9v11h-9z" fill="#fff" stroke="#444" />
            <path d="M3 3h6M3 5h6M3 7h6M3 9h6" stroke="#555" />
          </ViewButton>
          <ViewButton label="Full Screen Reading">
            <path d="M.5 2l5 1 .5 8-5.500-1zM11.500 2l-5 1-.5 8 5.500-1z" fill="#fff" stroke="#556" />
            <path d="M2 5h2M2 7h2M8 5h2M8 7h2" stroke="#556" />
          </ViewButton>
          <ViewButton label="Web Layout">
            <path d="M.5.5h9v10h-9z" fill="#fff" stroke="#556" />
            <path d="M2 3h6M2 5h6M2 7h3" stroke="#556" />
            <circle cx="9" cy="9" r="3" fill="#3f8f6a" />
          </ViewButton>
          <ViewButton label="Outline">
            <path d="M0 1.500h7M3 4.500h7M5 7.500h6M3 10.500h7" stroke="#778" />
          </ViewButton>
          <ViewButton label="Draft">
            <path d="M1 1.500h10M1 4.500h10M1 7.500h10M1 10.500h10" stroke="#556" />
          </ViewButton>
        </div>
        <span className="w-[38px] text-center">90%</span>
        <button type="button" aria-label="Zoom out" className="flex"><ZoomGlyph /></button>
        <input
          type="range"
          aria-label="Zoom"
          min="0"
          max="100"
          defaultValue="44"
          className="h-3 w-[102px] appearance-none bg-[linear-gradient(#dfeaf8,#dfeaf8)] bg-[length:100%_1px] bg-center bg-no-repeat [&::-webkit-slider-thumb]:h-3 [&::-webkit-slider-thumb]:w-[9px] [&::-webkit-slider-thumb]:appearance-none [&::-webkit-slider-thumb]:rounded-b-[4px] [&::-webkit-slider-thumb]:border [&::-webkit-slider-thumb]:border-[#3f5f94] [&::-webkit-slider-thumb]:bg-[#e9f0fa]"
        />
        <button type="button" aria-label="Zoom in" className="flex"><ZoomGlyph plus /></button>
      </div>
    </footer>
  );
}

/* ---------- taskbar ---------- */

function ExplorerIcon() {
  return (
    <Icon>
      <path d="M1 4q0-2 2-2h7l2 3h17q2 0 2 2v18H1z" fill="#eacb72" />
      <path d="M3 3h6v3H3z" fill="#30a84c" />
      <path d="M12 5h7v3h-7z" fill="#fff" />
      <path d="M12 5h4v2h-4z" fill="#d64a30" />
      <path d="M20 7h8v3h-8z" fill="#fff" />
      <path d="M20 7h4v2h-4z" fill="#3a83d6" />
      <path d="M0 9h19l2 3h11v17H1z" fill="#f8e7a4" stroke="#d6b765" strokeWidth="0.600" />
      <path d="M5 31v-9q0-3 3-3h16q3 0 3 3v9h-5v-6H10v6z" fill="#aadcf2" stroke="#59a4cc" />
    </Icon>
  );
}

function FirefoxIcon() {
  return (
    <Icon>
      <circle cx="16" cy="15" r="14" fill="#2b6cb8" />
      <path d="M16 1q10 0 13 9l-8-1-6-5z" fill="#58a8e2" />
      <path d="M4 5l3 4q4-2 8 0l-4 4 3 3q4 1 6-1 0 6-5 7 8 4 11-6 1-6-3-10 9 6 7 15-3 10-14 10Q2 30 1 17 1 10 4 5z" fill="#e66000" />
      <path d="M23 5q9 6 7 15-2 7-8 10 8-9 5-16z" fill="#ffc22e" />
      <path d="M3 13l6-2 3 2-4 4z" fill="#f58a1f" />
    </Icon>
  );
}

function WordIcon() {
  return (
    <Icon>
      <path d="M2 8q2-6 10-6h10v27H1V15z" fill="#2f62b5" />
      <path d="M2 8q2-6 10-6-8 6-9 26H1z" fill="#8fb2ea" />
      <path d="M9 4l22 2-2 25-22-2z" fill="#f3f7fd" stroke="#9bb1d3" />
      <path d="M11 8l2.500 8L17 9l1.500 8L23 8" fill="none" stroke="#24448f" strokeWidth="2.200" />
      <path d="M23 11h5M23 14h5M22 17h6M11 21h17M10 25h17" stroke="#24448f" strokeWidth="1.700" />
    </Icon>
  );
}

function ChromeIcon() {
  return (
    <Icon>
      <circle cx="16" cy="16" r="14" fill="#f8cf2c" />
      <path d="M3.900 9A14 14 0 0 1 28.100 9H16a7 7 0 0 0-6 10.500z" fill="#dc3b2c" />
      <path d="M3.900 9A14 14 0 0 0 16 30l6-10.500a7 7 0 0 1-12 0z" fill="#35a64c" />
      <circle cx="16" cy="16" r="6.800" fill="#fff" />
      <circle cx="16" cy="16" r="5.300" fill="#4386dc" />
    </Icon>
  );
}

function PaintIcon() {
  return (
    <Icon>
      <path d="M1 21Q0 9 14 7q13 0 14 8 0 5-5 6-4 1-4 4 0 3-6 3Q2 28 1 21z" fill="#cfe3f3" stroke="#86aecb" />
      <circle cx="15" cy="19" r="2.500" fill="#4a8aa3" />
      <circle cx="6" cy="18" r="2.700" fill="#dc3d34" />
      <circle cx="10" cy="12" r="2.700" fill="#53b445" />
      <circle cx="17" cy="10" r="2.700" fill="#f2b73c" />
      <circle cx="8" cy="24" r="2.200" fill="#3e78d0" />
      <path d="M25 8l3 2-8 20q-3 2-3-1z" fill="#e28b36" />
      <path d="M24 7q0-6 6-7 3 5-2 10z" fill="#8a6a4c" />
    </Icon>
  );
}

function TaskButton({ label, open, className, children }) {
  return (
    <button
      type="button"
      aria-label={label}
      className={clsx(
        'flex h-10 items-center justify-center',
        open && 'border border-[#8fb5c3] bg-[#5f97a8]',
        className,
      )}
    >
      {children}
    </button>
  );
}

function Taskbar() {
  return (
    <div className="flex h-10 shrink-0 items-center justify-between bg-[#347a91] text-[12px] text-white">
      <div className="flex items-center pl-[17px]">
        <TaskButton label="File Explorer" open className="w-[58px]"><ExplorerIcon /></TaskButton>
        <TaskButton label="Firefox" className="w-[66px]"><FirefoxIcon /></TaskButton>
        <div className="flex">
          <TaskButton label="Word" className="w-[50px] border border-white bg-[#86b0bd]"><WordIcon /></TaskButton>
          <span className="w-1 border border-l-0 border-white bg-[#6a9dac]" />
          <span className="w-1 border border-l-0 border-white bg-[#6a9dac]" />
        </div>
        <TaskButton label="Chrome" className="w-[66px]"><ChromeIcon /></TaskButton>
        <TaskButton label="Paint" open className="w-[58px]"><PaintIcon /></TaskButton>
      </div>
      <div className="flex items-center">
        <svg width="8" height="4"><path d="M0 4h8L4 0z" fill="#fff" /></svg>
        <svg width="16" height="16" viewBox="0 0 16 16" className="ml-3">
          <path d="M6.500 0h3L16 13l-1.500 3H1.500L0 13z" fill="#17a81f" />
          <path d="M6.500 0h3L16 13h-4L7 3.500 3.500 10l-3.500 3z" fill="#53e03c" />
          <path d="M8 7l2.500 5h-5z" fill="#347a91" />
        </svg>
        <svg width="17" height="16" viewBox="0 0 17 16" className="ml-2">
          <path d="M0 11h2v2H0zM3 9h2v4H3zM6 6h2v7H6zM9 3h2v10H9zM12 0h3v13h-3z" fill="#7d9aa5" stroke="#dfe8eb" strokeWidth="0.500" />
          <circle cx="12" cy="11" r="4.500" fill="#d93030" />
          <path d="M10 9l4 4M14 9l-4 4" stroke="#fff" strokeWidth="1.300" />
        </svg>
        <svg width="9" height="16" viewBox="0 0 9 16" className="ml-3.5">
          <path d="M3 .5h3v2h2.500v13h-8v-13H3z" fill="#347a91" stroke="#fff" />
          <path d="M2.500 4.500h4v9h-4z" fill="#2f5662" stroke="#fff" strokeWidth="0.500" />
        </svg>
        <svg width="13" height="14" viewBox="0 0 13 14" className="ml-2.5">
          <path d="M0 4.500h3L7 .5v13L3 9.500H0z" fill="#fff" />
          <path d="M9.500 4q2 3 0 6" fill="none" stroke="#fff" strokeWidth="1.200" />
        </svg>
        <div className="ml-[18px] text-center leading-[17px]">
          <div>IND</div>
          <div>US</div>
        </div>
        <div className="mr-[26px] ml-[18px] text-center text-[11px] leading-[17px]">
          <div className="text-[12px]">10:52</div>
          <div>04/11/2015</div>
        </div>
      </div>
    </div>
  );
}

/* Hand-drawn marks that point at the tab and at the Columns button. */
function PenMarks() {
  return (
    <div className="pointer-events-none absolute top-0 left-0 z-30 font-['Liberation_Serif',serif] font-bold text-[#ed1c24]">
      <svg width="450" height="130" viewBox="0 0 450 130" aria-hidden="true">
        <g fill="none" stroke="#000" strokeLinejoin="round" strokeLinecap="round">
          <path d="M259 31Q261 25 268 24H281L286 27 305 28 328 30 329 50Q322 53 310 52L285 51 260 49Q257 42 260 34" strokeWidth="4" />
          <path d="M279 66L284 55 300 53 327 55Q332 62 334 79L337 106V121L300 123 279 123 277 104 278 76 281 62" strokeWidth="4" />
          <path d="M335 66L373 68 372 59 411 73 376 86 374 79H336" strokeWidth="5" />
        </g>
      </svg>
      <span className="absolute top-1 left-[308px] text-[20px] leading-5">1</span>
      <span className="absolute top-[62px] left-[419px] text-[22px] leading-5">2</span>
    </div>
  );
}

export default function App() {
  return (
    <div className="relative flex h-screen min-w-[1230px] flex-col overflow-hidden bg-[#bfdbff] font-['Open_Sans','Noto_Sans',sans-serif] text-[11px]">
      <TitleBar />
      <TabStrip />
      <Ribbon />
      <Workspace />
      <StatusBar />
      <Taskbar />
      <button type="button" aria-label="Office Button" className="absolute top-1 left-[3px] z-10"><OfficeLogo /></button>
      <PenMarks />
    </div>
  );
}
